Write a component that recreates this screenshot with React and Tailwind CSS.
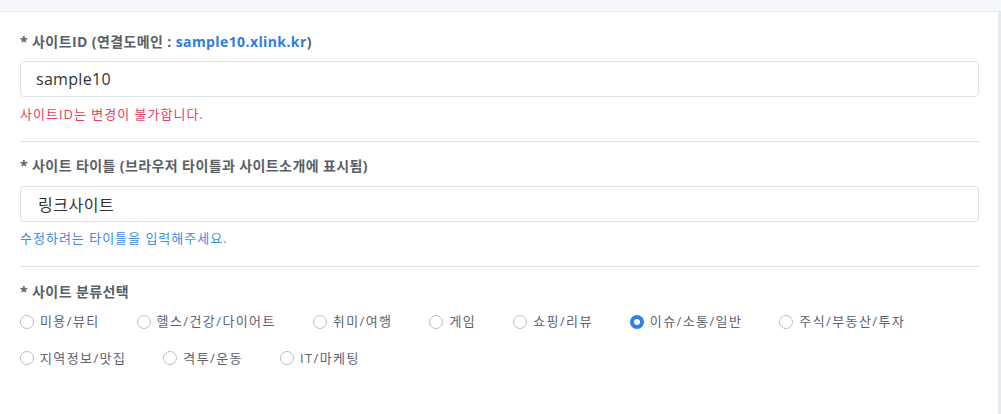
import React, { useState } from 'react';

const categories = [
  ['미용/뷰티', '헬스/건강/다이어트', '취미/여행', '게임', '쇼핑/리뷰', '이슈/소통/일반', '주식/부동산/투자'],
  ['지역정보/맛집', '격투/운동', 'IT/마케팅'],
];

const font = { fontFamily: '"Open Sans", "Noto Sans CJK KR", sans-serif' };

const Radio = ({ label, checked, onChange }) => (
  <label className="flex items-center mr-[37px] cursor-pointer">
    <span
      className={`w-[14px] h-[14px] rounded-full shrink-0 ${
        checked ? 'border-[4px] border-[#2f80ed] bg-white' : 'border border-[#b8c0cc] bg-white'
      }`}
    ></span>
    <input type="radio" className="hidden" checked={checked} onChange={onChange} />
    <span className="ml-[6px] text-[13px] tracking-[1.4px] text-[#5b6270]">{label}</span>
  </label>
);

const App = () => {
  const [category, setCategory] = useState('이슈/소통/일반');

  return (
    <div className="w-[1001px] h-[414px] bg-white overflow-hidden" style={font}>
      {/* 상단 영역 */}
      <div className="h-[12px] bg-[#f7f8fc] border-b border-[#e4e8f0]"></div>

      <div className="border-r-[3px] border-[#e6eaf1] h-[402px] pl-5 pr-[19px]">
        {/* 사이트ID */}
        <div className="pt-[21px]">
          <label className="block text-[14px] font-bold tracking-[0.4px] text-[#595f69] leading-[18px]">
            * 사이트ID (연결도메인 : <span className="text-[#2f7de1]">sample10.xlink.kr</span>)
          </label>
          <input
            type="text"
            defaultValue="sample10"
            readOnly
            className="mt-[10px] w-full h-[36px] px-[15px] border border-[#dbe2ec] rounded-[4px] text-[16px] tracking-[0.3px] text-[#333] outline-none"
          />
          <p className="mt-[9px] text-[13px] tracking-[1px] text-[#e8405f] leading-[16px]">사이트ID는 변경이 불가합니다.</p>
        </div>

        <div className="mt-[19px] border-t border-[#dde3ea]"></div>

        {/* 사이트 타이틀 */}
        <div className="pt-[15px]">
          <label className="block text-[14px] font-bold tracking-[0.4px] text-[#595f69] leading-[18px]">
            * 사이트 타이틀 (브라우저 타이틀과 사이트소개에 표시됨)
          </label>
          <input
            type="text"
            defaultValue="링크사이트"
            className="mt-[11px] w-full h-[36px] px-[17px] border border-[#dbe2ec] rounded-[4px] text-[16px] tracking-[0.5px] text-[#333] outline-none"
          />
          <p className="mt-[8px] text-[13px] tracking-[1px] text-[#3a8ee6] leading-[16px]">수정하려는 타이틀을 입력해주세요.</p>
        </div>

        <div className="mt-[20px] border-t border-[#dde3ea]"></div>

        {/* 사이트 분류선택 */}
        <div className="pt-[16px]">
          <label className="block text-[14px] font-bold tracking-[0.4px] text-[#595f69] leading-[18px]">* 사이트 분류선택</label>
          <div className="mt-[11px] flex flex-col gap-[17px]">
            {categories.map((row, i) => (
              <div key={i} className="flex items-center">
                {row.map((c) => (
                  <Radio key={c} label={c} checked={category === c} onChange={() => setCategory(c)} />
                ))}
              </div>
            ))}
          </div>
        </div>
      </div>
    </div>
  );
};

export default App;
